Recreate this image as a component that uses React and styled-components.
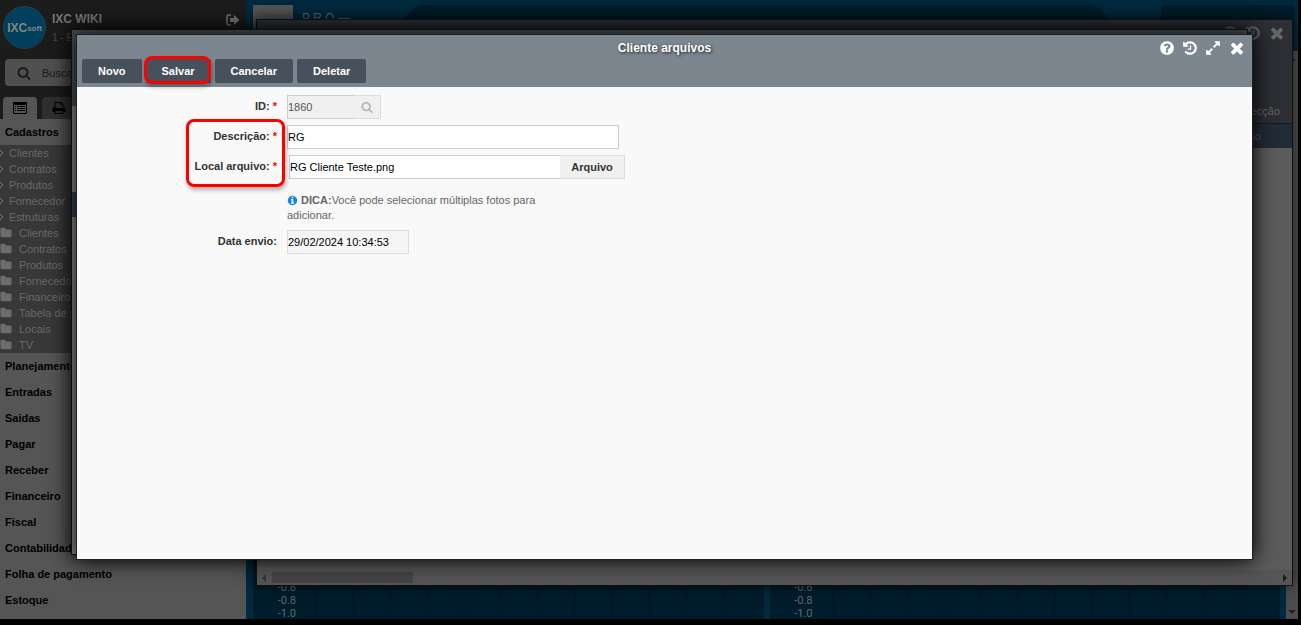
// libraries
import React from "react";
//Styling
import styled, { createGlobalStyle } from "styled-components";

const paths = {
  close:
    "M1490 1322q0 40-28 68l-136 136q-28 28-68 28t-68-28l-294-294-294 294q-28 28-68 28t-68-28l-136-136q-28-28-28-68t28-68l294-294-294-294q-28-28-28-68t28-68l136-136q28-28 68-28t68 28l294 294 294-294q28-28 68-28t68 28l136 136q28 28 28 68t-28 68l-294 294 294 294q28 28 28 68z",
  help: "M1024 1376v-192q0-14-9-23t-23-9h-192q-14 0-23 9t-9 23v192q0 14 9 23t23 9h192q14 0 23-9t9-23zm256-672q0-88-55.5-163t-138.5-116-170-41q-243 0-371 213-15 24 8 42l132 100q7 6 19 6 16 0 25-12 53-68 86-92 34-24 86-24 48 0 85.5 26t37.5 59q0 38-20 61t-68 45q-63 28-115.5 86.5t-52.5 125.5v36q0 14 9 23t23 9h192q14 0 23-9t9-23q0-19 21.5-49.5t54.5-49.5q32-18 49-28.5t46-35 44.5-48 28-60.5 12.5-81zm384 192q0 209-103 385.5t-279.5 279.5-385.5 103-385.5-103-279.5-279.5-103-385.5 103-385.5 279.5-279.5 385.5-103 385.5 103 279.5 279.5 103 385.5z",
  history:
    "M1664 896q0 156-61 298t-164 245-245 164-298 61q-172 0-327-72.5t-264-204.5q-7-10-6.5-22.5t8.5-20.5l137-138q10-9 25-9 16 2 23 12 73 95 179 147t225 52q104 0 198.5-40.5t163.5-109.5 109.5-163.5 40.5-198.5-40.5-198.5-109.5-163.5-163.5-109.5-198.5-40.5q-98 0-188 35.5t-160 101.5l137 138q31 30 14 69-17 40-59 40h-448q-26 0-45-19t-19-45v-448q0-42 40-59 39-17 69 14l130 129q107-101 244.5-156.5t284.5-55.5q156 0 298 61t245 164 164 245 61 298zm-640-288v448q0 14-9 23t-23 9h-320q-14 0-23-9t-9-23v-64q0-14 9-23t23-9h224v-352q0-14 9-23t23-9h64q14 0 23 9t9 23z",
  expand:
    "M883 1056q0 13-10 23l-332 332 144 144q19 19 19 45t-19 45-45 19h-448q-26 0-45-19t-19-45v-448q0-26 19-45t45-19 45 19l144 144 332-332q10-10 23-10t23 10l114 114q10 10 10 23zm781-864v448q0 26-19 45t-45 19-45-19l-144-144-332 332q-10 10-23 10t-23-10l-114-114q-10-10-10-23t10-23l332-332-144-144q-19-19-19-45t19-45 45-19h448q26 0 45 19t19 45z",
  search:
    "M1216 832q0-185-131.5-316.5t-316.5-131.5-316.5 131.5-131.5 316.5 131.5 316.5 316.5 131.5 316.5-131.5 131.5-316.5zm512 832q0 52-38 90t-90 38q-54 0-90-38l-343-342q-179 124-399 124-143 0-273.5-55.5t-225-150-150-225-55.5-273.5 55.5-273.5 150-225 225-150 273.5-55.5 273.5 55.5 225 150 150 225 55.5 273.5q0 220-124 399l343 343q37 37 37 90z",
  info: "M1152 1376v-160q0-14-9-23t-23-9h-96v-512q0-14-9-23t-23-9h-320q-14 0-23 9t-9 23v160q0 14 9 23t23 9h96v320h-96q-14 0-23 9t-9 23v160q0 14 9 23t23 9h448q14 0 23-9t9-23zm-128-896v-160q0-14-9-23t-23-9h-192q-14 0-23 9t-9 23v160q0 14 9 23t23 9h192q14 0 23-9t9-23zm640 416q0 209-103 385.5t-279.5 279.5-385.5 103-385.5-103-279.5-279.5-103-385.5 103-385.5 279.5-279.5 385.5-103 385.5 103 279.5 279.5 103 385.5z",
  folder:
    "M1728 608v704q0 92-66 158t-158 66h-1216q-92 0-158-66t-66-158v-960q0-92 66-158t158-66h320q92 0 158 66t66 158v32h672q92 0 158 66t66 158z",
  print:
    "M448 1536h896v-256h-896v256zm0-640h896v-384h-160q-40 0-68-28t-28-68v-160h-640v640zm1152 64q0-26-19-45t-45-19-45 19-19 45 19 45 45 19 45-19 19-45zm128 0v416q0 13-9.5 22.5t-22.5 9.5h-224v160q0 40-28 68t-68 28h-960q-40 0-68-28t-28-68v-160h-224q-13 0-22.5-9.5t-9.5-22.5v-416q0-79 56.5-135.5t135.5-56.5h64v-544q0-40 28-68t68-28h672q40 0 88 20t76 48l152 152q28 28 48 76t20 88v256h64q79 0 135.5 56.5t56.5 135.5z",
};

const shortcuts = ["Clientes", "Contratos", "Produtos", "Fornecedor", "Estruturas"];
const folders = [
  "Clientes",
  "Contratos",
  "Produtos",
  "Fornecedor",
  "Financeiro",
  "Tabela de preços",
  "Locais",
  "TV",
];
const sections = [
  "Planejamento",
  "Entradas",
  "Saidas",
  "Pagar",
  "Receber",
  "Financeiro",
  "Fiscal",
  "Contabilidade",
  "Folha de pagamento",
  "Estoque",
];

function Icon({ name, size }) {
  return (
    <svg width={size} height={size} viewBox="0 0 1792 1792" fill="currentColor" aria-hidden="true">
      <path d={paths[name]} />
    </svg>
  );
}

function Sidebar() {
  return (
    <Side>
      <Account>
        <Avatar>
          IXC<small>soft</small>
        </Avatar>
        <div>
          <h2>IXC WIKI</h2>
          <p>1 - Empresa</p>
        </div>
        <IconButton type="button" aria-label="Sair">
          <svg width="14" height="12" viewBox="0 0 14 12" fill="none" stroke="currentColor">
            <path d="M5 1H2.5Q1 1 1 2.5v7Q1 11 2.5 11H5" strokeWidth="1.5" />
            <path d="M4 4h4V1l5.5 5L8 11V8H4z" fill="currentColor" stroke="none" />
          </svg>
        </IconButton>
      </Account>
      <Search>
        <Icon name="search" size={14} />
        <input type="text" placeholder="Buscar" aria-label="Buscar" />
      </Search>
      <SideTabs>
        <SideTab type="button" $active aria-label="Menu">
          <svg width="14" height="12" viewBox="0 0 14 12" fill="currentColor">
            <path d="M1 0h12q1 0 1 1v10q0 1-1 1H1q-1 0-1-1V1q0-1 1-1zM1 3v8h12V3z" fillRule="evenodd" />
            <path d="M2 4h1v1H2zM4 4h8v1H4zM2 6h1v1H2zM4 6h8v1H4zM2 8h1v1H2zM4 8h8v1H4z" />
          </svg>
        </SideTab>
        <SideTab type="button" aria-label="Imprimir">
          <Icon name="print" size={14} />
        </SideTab>
      </SideTabs>
      <Section href="#cadastros">Cadastros</Section>
      <Tree>
        {shortcuts.map((item) => (
          <li key={item}>
            <TreeLink href="#atalho">
              <svg width="5" height="8" viewBox="0 0 5 8" fill="none" stroke="currentColor">
                <path d="M0 1l3 3-3 3" />
              </svg>
              {item}
            </TreeLink>
          </li>
        ))}
        {folders.map((item) => (
          <li key={item}>
            <TreeLink href="#pasta" $folder>
              <Icon name="folder" size={12} />
              {item}
            </TreeLink>
          </li>
        ))}
      </Tree>
      {sections.map((item) => (
        <Section href="#secao" key={item}>
          {item}
        </Section>
      ))}
    </Side>
  );
}

function ChartPanel() {
  return (
    <Panel>
      <Ticks>
        <li>-0.6</li>
        <li>-0.8</li>
        <li>-1.0</li>
      </Ticks>
      <svg width="100%" height="46" fill="none" stroke="#001923" aria-hidden="true">
        <path d="M12 0v43M49 0v43M86 0v43M123 0v43M160 0v43M197 0v43M234 0v43M271 0v43M308 0v43M345 0v43M382 0v43M419 0v43" />
        <path d="M0 43h460" />
      </svg>
    </Panel>
  );
}

function Dashboard() {
  return (
    <Main>
      <TopBar>
        <LogoBox />
        <Plan>P R O —</Plan>
        <TopPill />
        <TopBox />
      </TopBar>
      <Content>
        <Charts>
          <ChartPanel />
          <ChartPanel />
        </Charts>
        <ScrollRail>
          <svg width="12" height="15" viewBox="0 0 12 15" fill="#222">
            <path d="M2 10l4-4 4 4z" />
          </svg>
          <svg width="12" height="15" viewBox="0 0 12 15" fill="#222">
            <path d="M2 6l4 4 4-4z" />
          </svg>
        </ScrollRail>
      </Content>
    </Main>
  );
}

function ClientWindow() {
  return (
    <BackWindow>
      <BackHead>
        <BackTools>
          <Icon name="help" size={16} />
          <Icon name="history" size={16} />
          <Icon name="close" size={18} />
        </BackTools>
        <p>Projecção</p>
      </BackHead>
      <BackRow>Opção</BackRow>
      <BackBody />
      <HorizontalRail>
        <svg width="15" height="14" viewBox="0 0 15 14" fill="#333">
          <path d="M9 3v8L5 7z" />
        </svg>
        <HorizontalThumb />
        <svg width="15" height="14" viewBox="0 0 15 14" fill="#1c1c1c">
          <path d="M6 3v8l4-4z" />
        </svg>
      </HorizontalRail>
    </BackWindow>
  );
}

function FilesWindow() {
  return (
    <FrontWindow role="dialog" aria-labelledby="title">
      <Header>
        <TitleBar>
          <h1 id="title">Cliente arquivos</h1>
          <Tools>
            <IconButton type="button" aria-label="Ajuda">
              <Icon name="help" size={16} />
            </IconButton>
            <IconButton type="button" aria-label="Histórico">
              <Icon name="history" size={16} />
            </IconButton>
            <IconButton type="button" aria-label="Expandir">
              <Icon name="expand" size={16} />
            </IconButton>
            <IconButton type="button" aria-label="Fechar">
              <Icon name="close" size={18} />
            </IconButton>
          </Tools>
        </TitleBar>
        <Actions>
          <Action type="button">Novo</Action>
          <Marked>
            <Action type="button">Salvar</Action>
            <ActionMark />
          </Marked>
          <Action type="button">Cancelar</Action>
          <Action type="button">Deletar</Action>
        </Actions>
      </Header>
      <Form>
        <Row>
          <label htmlFor="id">
            ID: <b>*</b>
          </label>
          <Field>
            <Input id="id" $width={67} $joined $muted defaultValue="1860" disabled />
            <FieldButton type="button" $width={27} aria-label="Pesquisar" disabled>
              <Icon name="search" size={12} />
            </FieldButton>
          </Field>
        </Row>
        <Marked>
          <Row>
            <label htmlFor="descricao">
              Descrição: <b>*</b>
            </label>
            <Field>
              <Input id="descricao" $width={332} defaultValue="RG" />
            </Field>
          </Row>
          <Row>
            <label htmlFor="arquivo">
              Local arquivo: <b>*</b>
            </label>
            <Field $inset>
              <Input id="arquivo" $width={271} $joined defaultValue="RG Cliente Teste.png" />
              <FieldButton type="button" $width={65}>
                Arquivo
              </FieldButton>
            </Field>
          </Row>
          <FieldsMark />
        </Marked>
        <Hint>
          <Icon name="info" size={11} /> <strong>DICA:</strong>Você pode selecionar múltiplas fotos
          para adicionar.
        </Hint>
        <Row>
          <label htmlFor="data">Data envio:</label>
          <Field>
            <Input id="data" $width={122} $soft defaultValue="29/02/2024 10:34:53" readOnly />
          </Field>
        </Row>
      </Form>
    </FrontWindow>
  );
}

function App() {
  return (
    <>
      <GlobalStyle />
      <Desktop>
        <Sidebar />
        <Dashboard />
        <ClientWindow />
        <MiddleWindow>
          <MiddleHead />
          <MiddleBody>
            <MiddleRow />
          </MiddleBody>
        </MiddleWindow>
        <FilesWindow />
      </Desktop>
    </>
  );
}

const GlobalStyle = createGlobalStyle`
  * {
    margin: 0;
    padding: 0;
    box-sizing: border-box;
  }
  body {
    background: #000;
    font-family: "Liberation Sans", Arial, sans-serif;
    font-size: 11px;
  }
  button, input {
    font: inherit;
    border: none;
  }
  a {
    text-decoration: none;
  }
  ul {
    list-style: none;
  }
`;

const Desktop = styled.div`
  position: relative;
  display: flex;
  height: 100vh;
  padding: 0 3px 6px 0;
  overflow: hidden;
`;

const Side = styled.nav`
  display: flex;
  flex-direction: column;
  flex: none;
  width: 246px;
  overflow: hidden;
  background: linear-gradient(#1c1c1c, #1c1c1c 119px, #555 119px);
`;

const IconButton = styled.button`
  display: flex;
  background: none;
  color: inherit;
`;

const Account = styled.div`
  display: flex;
  flex: none;
  gap: 6px;
  height: 59px;
  padding: 6px 6px 0 3px;
  color: #777;
  h2 {
    padding-top: 5px;
    font-size: 12px;
    line-height: 16px;
  }
  p {
    padding-top: 5px;
    color: #4c4c4c;
    font-size: 10px;
    line-height: 12px;
  }
  ${IconButton} {
    margin-left: auto;
    padding-top: 8px;
    align-self: flex-start;
  }
`;

const Avatar = styled.div`
  display: flex;
  align-items: center;
  justify-content: center;
  width: 43px;
  height: 43px;
  border: 1px solid #24404c;
  border-radius: 50%;
  background: #00405c;
  color: #858585;
  font-size: 12px;
  font-weight: bold;
  small {
    padding-top: 2px;
    font-size: 8px;
  }
`;

const Search = styled.div`
  display: flex;
  align-items: center;
  flex: none;
  gap: 11px;
  height: 27px;
  margin: 0 5px;
  padding: 0 12px;
  border-radius: 4px;
  background: #505050;
  color: #1b1b1b;
  input {
    flex: 1;
    min-width: 0;
    background: none;
  }
  input::placeholder {
    color: #1b1b1b;
  }
`;

const SideTabs = styled.div`
  display: flex;
  flex: none;
  gap: 5px;
  height: 33px;
  padding: 11px 3px 0;
`;

const SideTab = styled.button`
  display: flex;
  align-items: center;
  justify-content: center;
  width: 34px;
  border-radius: 4px 4px 0 0;
  background: ${(props) => (props.$active ? "#555" : "#303030")};
  color: #000;
`;

const Section = styled.a`
  flex: none;
  padding-left: 5px;
  color: #000;
  font-weight: bold;
  line-height: 26px;
`;

const Tree = styled.ul`
  flex: none;
  background: #383838;
`;

const TreeLink = styled.a`
  display: flex;
  align-items: center;
  gap: ${(props) => (props.$folder ? 7 : 4)}px;
  height: 16px;
  color: #686868;
  line-height: 16px;
  svg {
    flex: none;
    color: ${(props) => (props.$folder ? "#6c6c6c" : "#777")};
  }
`;

const Main = styled.main`
  display: flex;
  flex-direction: column;
  flex: 1;
  min-width: 0;
  background: #002a3e;
`;

const TopBar = styled.div`
  display: flex;
  height: 51px;
  padding: 5px 3px 0 7px;
`;

const LogoBox = styled.div`
  width: 40px;
  background: #555;
`;

const Plan = styled.p`
  width: 103px;
  padding: 5px 0 0 9px;
  color: #566f7a;
  font-size: 12px;
  line-height: 16px;
`;

const TopPill = styled.div`
  flex: 1;
  margin: 0 53px 0 9px;
  border-radius: 20px;
  background: #001d2b;
`;

const TopBox = styled.div`
  width: 134px;
  border-radius: 5px;
  background: #001d2b;
`;

const Content = styled.div`
  display: flex;
  flex: 1;
  min-height: 0;
`;

const Charts = styled.div`
  display: grid;
  grid-template-columns: 1fr 1fr;
  flex: 1;
  gap: 6px;
  padding: 0 6px 0 7px;
`;

const Panel = styled.section`
  display: flex;
  align-items: flex-end;
  gap: 8px;
  min-width: 0;
  background: #001d2b;
`;

const Ticks = styled.ul`
  flex: none;
  width: 43px;
  margin-bottom: -1px;
  color: #5d6a70;
  font-family: Roboto, sans-serif;
  font-size: 11px;
  line-height: 13px;
  text-align: right;
`;

const ScrollRail = styled.div`
  display: flex;
  flex-direction: column;
  justify-content: space-between;
  width: 12px;
  background: #4c4c4c;
`;

// the three stacked windows
const Window = styled.section`
  position: absolute;
  display: flex;
  flex-direction: column;
  border: 1px solid #111;
  overflow: hidden;
`;

const BackWindow = styled(Window)`
  inset: 19px 8px 39px 256px;
  box-shadow: 0 0 14px rgba(0, 0, 0, 0.6);
`;

const BackHead = styled.div`
  display: flex;
  flex-direction: column;
  align-items: flex-end;
  justify-content: space-between;
  height: 104px;
  padding: 4px 6px 5px;
  background: #2c2f34;
  color: #666;
  border-bottom: 1px solid #17191c;
  p {
    padding-right: 6px;
    line-height: 14px;
  }
`;

const BackTools = styled.div`
  display: flex;
  align-items: center;
  gap: 7px;
`;

const BackRow = styled.div`
  height: 24px;
  padding-right: 31px;
  background: #222c37;
  color: #59616b;
  line-height: 24px;
  text-align: right;
`;

const BackBody = styled.div`
  flex: 1;
  background: #5b5b5b;
`;

const HorizontalRail = styled.div`
  display: flex;
  align-items: center;
  height: 15px;
  background: #555;
`;

const HorizontalThumb = styled.div`
  width: 141px;
  height: 11px;
  margin-right: auto;
  background: #444;
`;

const MiddleWindow = styled(Window)`
  inset: 29px 53px 70px 71px;
  box-shadow: 0 0 20px rgba(0, 0, 0, 0.8);
`;

const MiddleHead = styled.div`
  height: 76px;
  background: #434a52;
`;

const MiddleBody = styled.div`
  flex: 1;
  padding-top: 86px;
  background: #7c7c7c;
`;

const MiddleRow = styled.div`
  height: 25px;
  background: #2f4054;
`;

const FrontWindow = styled(Window)`
  inset: 34px 48px 65px 76px;
  border-color: #1e1f21;
  background: #f9f9f9;
  box-shadow: 0 0 20px rgba(0, 0, 0, 0.8);
`;

const Header = styled.header`
  height: 52px;
  background: #7c868f;
`;

const TitleBar = styled.div`
  display: grid;
  grid-template-columns: 1fr auto 1fr;
  align-items: center;
  height: 24px;
  padding-top: 2px;
  h1 {
    grid-column: 2;
    color: #fff;
    font-size: 12px;
    text-shadow: 1px 1px 3px #222;
  }
`;

const Tools = styled.div`
  display: flex;
  align-items: center;
  justify-content: flex-end;
  gap: 7px;
  padding-right: 6px;
  color: #fff;
`;

const Actions = styled.div`
  display: flex;
  gap: 4px;
  padding-left: 5px;
`;

const Action = styled.button`
  height: 24px;
  padding: 0 16px;
  border-radius: 2px;
  background: #47515b;
  color: #fff;
  font-weight: bold;
`;

const Marked = styled.div`
  position: relative;
`;

const Mark = styled.span`
  position: absolute;
  border: 3px solid #f00;
  border-radius: 8px;
  box-shadow: 1px 3px 4px rgba(0, 0, 0, 0.3);
  pointer-events: none;
`;

const ActionMark = styled(Mark)`
  inset: -3px 0 -1px -2px;
`;

const FieldsMark = styled(Mark)`
  top: -6px;
  left: 109px;
  width: 99px;
  height: 68px;
`;

const Form = styled.form`
  padding-top: 8px;
`;

const Row = styled.div`
  display: grid;
  grid-template-columns: 200px 1fr;
  gap: 10px;
  height: 30px;
  label {
    color: #333;
    font-weight: bold;
    line-height: 22px;
    text-align: right;
  }
  b {
    color: #f00;
  }
`;

const Field = styled.div`
  display: flex;
  height: 24px;
  padding-left: ${(props) => (props.$inset ? 2 : 0)}px;
`;

const Input = styled.input`
  width: ${(props) => props.$width}px;
  border: 1px solid ${(props) => (props.$soft ? "#ddd" : "#ccc")};
  border-right-width: ${(props) => (props.$joined ? 0 : 1)}px;
  background: ${(props) => (props.$muted ? "#f0f0f0" : props.$soft ? "#f5f5f5" : "#fff")};
  color: ${(props) => (props.$muted ? "#555" : "#000")};
`;

const FieldButton = styled.button`
  display: flex;
  align-items: center;
  justify-content: center;
  width: ${(props) => props.$width}px;
  border: 1px solid #ddd;
  border-left: none;
  background: #f0f0f0;
  color: ${(props) => (props.disabled ? "#b5b5b5" : "#333")};
  font-weight: bold;
`;

const Hint = styled.p`
  width: 475px;
  padding: 8px 0 7px 210px;
  color: #666;
  line-height: 15px;
  svg {
    color: #0d84ee;
    vertical-align: -2px;
  }
`;

export default App;
